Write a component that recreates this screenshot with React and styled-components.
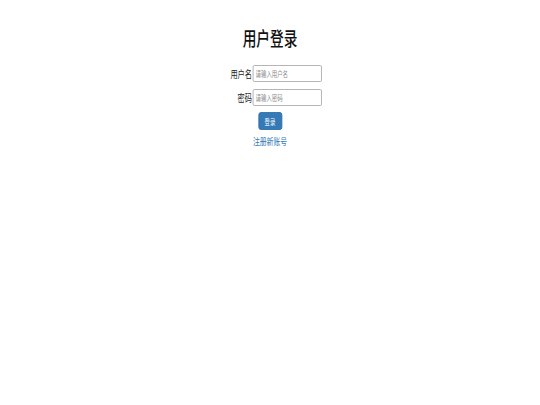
import React from "react";
import styled, { createGlobalStyle } from "styled-components";

const GlobalStyle = createGlobalStyle`
  html, body {
    margin: 0;
    padding: 0;
    background: #ffffff;
    font-family: "Noto Sans CJK SC", "Noto Sans", sans-serif;
    color: #222222;
  }
`;

const Page = styled.div`
  width: 540px;
  height: 405px;
  overflow: hidden;
`;

// the screenshot is narrower than it is tall, so the whole form is squeezed
const Squeeze = styled.div`
  width: 540px;
  transform: scaleX(0.72);
  transform-origin: 270px 0;
  display: flex;
  flex-direction: column;
  align-items: center;
  padding-top: 28px;
`;

const Title = styled.h1`
  margin: 0 0 17px;
  font-size: 19px;
  line-height: 20px;
  font-weight: 500;
  color: #111111;
`;

const Row = styled.div`
  display: flex;
  align-items: center;
  gap: 1px;
  margin-bottom: ${(p) => p.$gap || 0}px;
`;

const Label = styled.label`
  width: 47px;
  text-align: right;
  font-size: 10px;
  line-height: 12px;
  color: #222222;
`;

const Input = styled.input`
  box-sizing: border-box;
  width: 96px;
  height: 17px;
  padding: 0 3px;
  border: 1px solid #a9a9a9;
  border-radius: 2px;
  font-family: inherit;
  font-size: 7.5px;
  outline: none;
  &::placeholder {
    color: #8a8a8a;
  }
`;

const Button = styled.button`
  box-sizing: border-box;
  width: 33px;
  height: 18px;
  margin-top: 6px;
  padding: 0;
  border: 1px solid #2e6da4;
  border-radius: 3px;
  background: #337ab7;
  color: #ffffff;
  font-family: inherit;
  font-size: 7.5px;
  cursor: pointer;
`;

const Link = styled.a`
  margin-top: 5px;
  font-size: 9.5px;
  line-height: 12px;
  color: #337ab7;
  text-decoration: none;
`;

export default function App() {
  return (
    <Page>
      <GlobalStyle />
      <Squeeze>
        <Title>用户登录</Title>
        <Row $gap={7}>
          <Label>用户名</Label>
          <Input placeholder="请输入用户名" />
        </Row>
        <Row>
          <Label>密码</Label>
          <Input type="password" placeholder="请输入密码" />
        </Row>
        <Button type="button">登录</Button>
        <Link href="#">注册新账号</Link>
      </Squeeze>
    </Page>
  );
}
